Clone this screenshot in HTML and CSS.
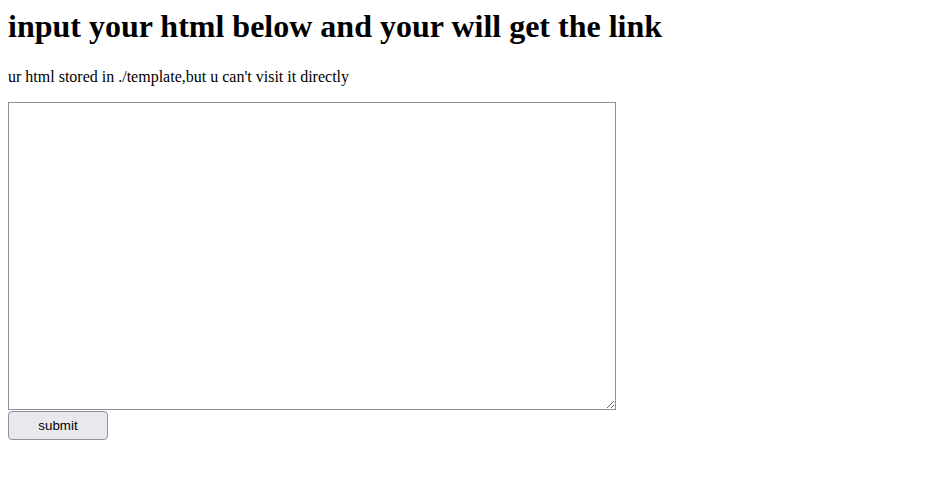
FILE: index.html
```html
<!DOCTYPE html>
<html>
<head>
<meta charset="utf-8">
<link rel="stylesheet" href="styles.css">
</head>
<body class="page">
<h1 class="title">input your html below and your will get the link</h1>
<p class="note">ur html stored in ./template,but u can't visit it directly</p>
<form class="form">
<textarea class="editor" name="html"></textarea><br>
<input class="submit" type="submit" value="submit">
</form>
</body>
</html>
```
FILE: styles.css
```css
.page {
  margin: 8px;
  font-family: "Liberation Serif", "Times New Roman", serif;
  color: #000;
  background: #fff;
}
.title {
  font-size: 32px;
  font-weight: bold;
  margin: 0 0 23px;
}
.note {
  font-size: 16px;
  margin: 16px 0;
}
.form {
  margin: 0;
}
.editor {
  box-sizing: border-box;
  width: 608px;
  height: 308px;
  border: 1px solid #8f8f9d;
  padding: 2px;
  margin: 0;
  resize: both;
  vertical-align: text-bottom;
}
.submit {
  box-sizing: border-box;
  width: 100px;
  height: 29px;
  margin: 0;
  font-family: "Liberation Sans", Arial, sans-serif;
  font-size: 13.33px;
  color: #000;
  background: #e9e9ed;
  border: 1px solid #8f8f9d;
  border-radius: 4px;
}
```
